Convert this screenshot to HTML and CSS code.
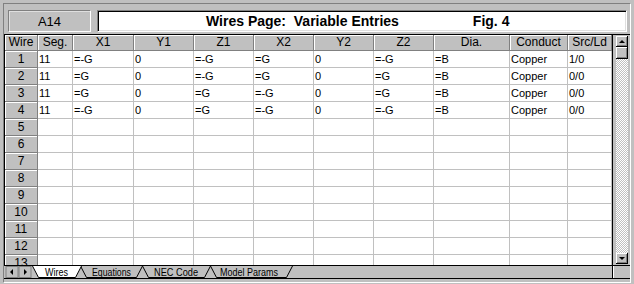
FILE: index.html
```html
<!DOCTYPE html>
<html lang="en">
  <head>
    <meta charset="UTF-8" />
    <title>Wires Page</title>
    <link rel="stylesheet" href="styles.css">
  </head>
  <body>
    <div class="frame">
      <div class="toolbar">
        <div class="cell-ref">A14</div>
        <div class="title-box">
          <span class="title">Wires Page:&nbsp; Variable Entries</span>
          <span class="fig">Fig. 4</span>
        </div>
      </div>

      <div class="sheet">
        <div class="grid-wrap">
          <table class="grid">
            <colgroup>
              <col style="width:33px"><col style="width:35px"><col style="width:61px">
              <col style="width:60px"><col style="width:60px"><col style="width:60px">
              <col style="width:60px"><col style="width:60px"><col style="width:76px">
              <col style="width:58px"><col style="width:44px">
            </colgroup>
            <thead>
              <tr>
                <th>Wire</th><th>Seg.</th><th>X1</th><th>Y1</th><th>Z1</th><th>X2</th>
                <th>Y2</th><th>Z2</th><th>Dia.</th><th>Conduct</th><th>Src/Ld</th>
              </tr>
            </thead>
            <tbody>
              <tr><th>1</th><td>11</td><td>=-G</td><td>0</td><td>=-G</td><td>=G</td><td>0</td><td>=-G</td><td>=B</td><td>Copper</td><td>1/0</td></tr>
              <tr><th>2</th><td>11</td><td>=G</td><td>0</td><td>=-G</td><td>=G</td><td>0</td><td>=G</td><td>=B</td><td>Copper</td><td>0/0</td></tr>
              <tr><th>3</th><td>11</td><td>=G</td><td>0</td><td>=G</td><td>=-G</td><td>0</td><td>=G</td><td>=B</td><td>Copper</td><td>0/0</td></tr>
              <tr><th>4</th><td>11</td><td>=-G</td><td>0</td><td>=G</td><td>=-G</td><td>0</td><td>=-G</td><td>=B</td><td>Copper</td><td>0/0</td></tr>
              <tr><th>5</th><td></td><td></td><td></td><td></td><td></td><td></td><td></td><td></td><td></td><td></td></tr>
              <tr><th>6</th><td></td><td></td><td></td><td></td><td></td><td></td><td></td><td></td><td></td><td></td></tr>
              <tr><th>7</th><td></td><td></td><td></td><td></td><td></td><td></td><td></td><td></td><td></td><td></td></tr>
              <tr><th>8</th><td></td><td></td><td></td><td></td><td></td><td></td><td></td><td></td><td></td><td></td></tr>
              <tr><th>9</th><td></td><td></td><td></td><td></td><td></td><td></td><td></td><td></td><td></td><td></td></tr>
              <tr><th>10</th><td></td><td></td><td></td><td></td><td></td><td></td><td></td><td></td><td></td><td></td></tr>
              <tr><th>11</th><td></td><td></td><td></td><td></td><td></td><td></td><td></td><td></td><td></td><td></td></tr>
              <tr><th>12</th><td></td><td></td><td></td><td></td><td></td><td></td><td></td><td></td><td></td><td></td></tr>
              <tr><th>13</th><td></td><td></td><td></td><td></td><td></td><td></td><td></td><td></td><td></td><td></td></tr>
            </tbody>
          </table>
        </div>
        <div class="vscroll">
          <div class="sbtn">
            <svg width="10" height="9" viewBox="0 0 10 9"><polygon points="2,6 8,6 5,3" fill="#000"/></svg>
          </div>
          <div class="thumb"></div>
          <div class="track"></div>
          <div class="sbtn">
            <svg width="10" height="8" viewBox="0 0 10 8"><polygon points="2,3 8,3 5,6" fill="#000"/></svg>
          </div>
        </div>
      </div>

      <div class="tabbar">
        <svg class="tabs" width="608" height="12" viewBox="0 0 608 12">
          <!-- scroll arrows -->
          <rect x="2" y="0.5" width="12" height="11" fill="#c0c0c0" stroke="#808080"/>
          <polygon points="6,6 9,3 9,9" fill="#000"/>
          <rect x="15" y="0.5" width="12" height="11" fill="#c0c0c0" stroke="#808080"/>
          <polygon points="23,6 20,3 20,9" fill="#000"/>
          <!-- inactive tabs -->
          <polyline points="76.5,0 82.5,11.5 132.5,11.5 138.5,0" fill="#c0c0c0" stroke="#000"/>
          <text x="88" y="9.5" textLength="39" lengthAdjust="spacingAndGlyphs">Equations</text>
          <polyline points="138.5,0 144.5,11.5 200.5,11.5 206.5,0" fill="#c0c0c0" stroke="#000"/>
          <text x="150" y="9.5" textLength="44" lengthAdjust="spacingAndGlyphs">NEC Code</text>
          <polyline points="206.5,0 212.5,11.5 282.5,11.5 288.5,0" fill="#c0c0c0" stroke="#000"/>
          <text x="216" y="9.5" textLength="58" lengthAdjust="spacingAndGlyphs">Model Params</text>
          <!-- active tab -->
          <polyline points="28.5,0 34.5,11.5 71.5,11.5 77.5,0" fill="#fff" stroke="#000"/>
          <text x="41" y="9.5" textLength="23" lengthAdjust="spacingAndGlyphs">Wires</text>
        </svg>
        <div class="tab-rest"></div>
      </div>
    </div>
  </body>
</html>
```

FILE: styles.css
```css
html,
body {
  margin: 0;
  padding: 0;
}

body {
  width: 634px;
  height: 284px;
  background-color: #c0c0c0;
  font-family: "Liberation Sans", Arial, sans-serif;
  font-size: 11px;
  color: #000;
  overflow: hidden;
}

.frame {
  box-sizing: border-box;
  width: 628px;
  height: 280px;
  margin: 3px 0 0 3px;
  border-top: 1px solid #808080;
  border-left: 1px solid #808080;
  border-right: 1px solid #fff;
  border-bottom: 1px solid #fff;
  display: flex;
  flex-direction: column;
}

.toolbar {
  height: 30px;
  box-sizing: border-box;
  padding: 6px 0 0 4px;
  display: flex;
  gap: 6px;
}

.cell-ref {
  box-sizing: border-box;
  width: 83px;
  height: 22px;
  border-top: 1px solid #808080;
  border-left: 1px solid #808080;
  border-right: 1px solid #fff;
  border-bottom: 1px solid #fff;
  box-shadow: inset 1px 1px 0 #dfdfdf;
  display: flex;
  align-items: center;
  justify-content: center;
  font-size: 13px;
}

.title-box {
  box-sizing: border-box;
  width: 530px;
  height: 22px;
  background: #fff;
  border-top: 1px solid #808080;
  border-left: 1px solid #808080;
  border-right: 1px solid #fff;
  border-bottom: 1px solid #fff;
  box-shadow: inset 1px 1px 0 #000, inset -1px -1px 0 #dfdfdf;
  display: flex;
  align-items: center;
  padding-left: 108px;
  gap: 74px;
  font-size: 14px;
  font-weight: bold;
}

.sheet {
  display: flex;
  height: 232px;
  box-sizing: border-box;
  border-top: 1px solid #000;
  border-bottom: 1px solid #000;
}

.grid-wrap {
  width: 607px;
  height: 230px;
  overflow: hidden;
  border-left: 1px solid #000;
  border-right: 1px solid #000;
  background: #fff;
}

.grid {
  table-layout: fixed;
  width: 607px;
  border-collapse: separate;
  border-spacing: 0;
}

.grid th,
.grid td {
  box-sizing: border-box;
  padding: 0 0 0 1px;
  height: 17px;
  line-height: 16px;
  white-space: nowrap;
  overflow: hidden;
  font-weight: normal;
}

.grid td {
  border-right: 1px solid #c0c0c0;
  border-bottom: 1px solid #c0c0c0;
}

.grid th {
  background: #c0c0c0;
  text-align: center;
  padding: 0;
  font-size: 12px;
  border-right: 1px solid #808080;
  border-bottom: 1px solid #808080;
  box-shadow: inset 1px 1px 0 #fff;
}

.grid thead th {
  height: 16px;
  line-height: 15px;
}

.vscroll {
  width: 17px;
  box-sizing: border-box;
  padding: 1px 1px 1px 3px;
  display: flex;
  flex-direction: column;
}

.sbtn,
.thumb {
  box-sizing: border-box;
  width: 12px;
  height: 11px;
  background: #c0c0c0;
  border-right: 1px solid #000;
  border-bottom: 1px solid #000;
  box-shadow: inset 1px 1px 0 #fff, inset -1px -1px 0 #808080;
  display: flex;
  align-items: center;
  justify-content: center;
}

.thumb {
  height: 12px;
}

.track {
  flex: 1;
  width: 12px;
  background: repeating-conic-gradient(#fff 0 25%, #c0c0c0 0 50%) 0 0 / 2px 2px;
}

.tabbar {
  display: flex;
  height: 13px;
  box-sizing: border-box;
  border-bottom: 1px solid #000;
}

.tabs {
  display: block;
  font-family: "Liberation Sans", Arial, sans-serif;
  font-size: 11px;
}

.tab-rest {
  flex: 1;
  border-left: 1px solid #000;
  box-shadow: inset 1px 0 0 #fff;
}
```
